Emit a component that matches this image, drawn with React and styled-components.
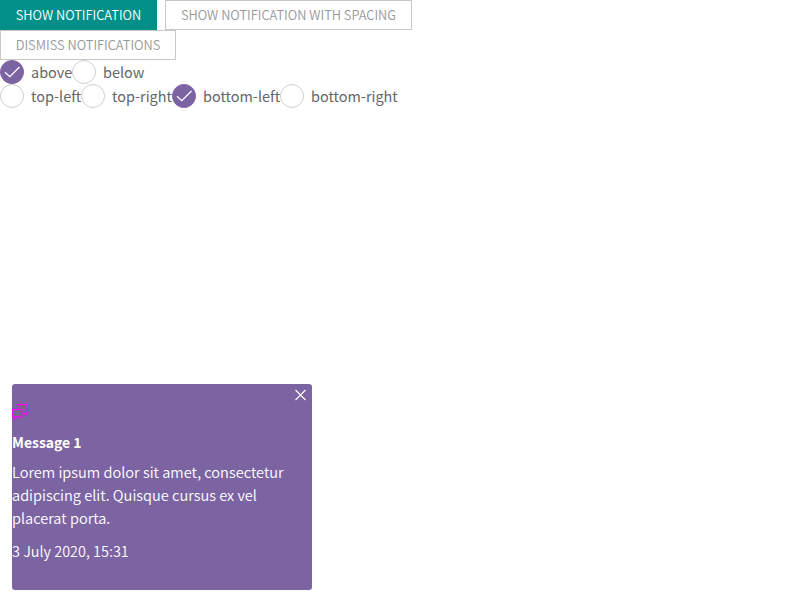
import React, { useState } from 'react';
import styled, { createGlobalStyle, css } from 'styled-components';

const GlobalStyle = createGlobalStyle`
  *, *::before, *::after { box-sizing: border-box; }
  body {
    margin: 0;
    background: #fff;
    color: #63666a;
    font-family: "Noto Sans CJK SC", sans-serif;
    font-size: 14.45px;
    line-height: 24px;
  }
  #root { height: 100vh; }
`;

const Page = styled.main`
  position: relative;
  height: 600px;
  overflow: hidden;
`;

const ButtonRow = styled.div`
  display: flex;
  gap: 8px;
`;

const Button = styled.button`
  display: block;
  width: ${p => p.$width}px;
  height: 30px;
  margin: 0;
  padding: 0;
  border: 1px solid #c8c9c7;
  background: #fff;
  color: #97999b;
  font-family: inherit;
  font-size: 12.82px;
  font-weight: 350;
  line-height: 28px;
  text-align: center;
  text-transform: uppercase;
  white-space: nowrap;
  ${p => p.$primary && css`
    border-color: #008f89;
    background: #008f89;
    color: #fff;
  `}
`;

const RadioRow = styled.div`
  display: flex;
  height: 24px;
`;

const RadioLabel = styled.label`
  display: flex;
  gap: 7px;
  width: ${p => p.$width}px;
  white-space: nowrap;
  cursor: pointer;
`;

const RadioMark = styled.span`
  display: block;
  flex: none;
  width: 24px;
  height: 24px;
  border: 1px solid ${p => (p.$checked ? '#7c63a2' : '#d0d0ce')};
  border-radius: 50%;
  background: ${p => (p.$checked ? '#7c63a2' : '#fff')};

  svg { display: block; }
`;

const Notification = styled.section`
  position: absolute;
  left: 12px;
  bottom: 10px;
  width: 300px;
  height: 206px;
  padding-top: 20px;
  border-radius: 3px;
  background: #7c63a2;
  color: #fff;
`;

const CloseButton = styled.button`
  position: absolute;
  top: 5px;
  right: 6px;
  width: 12px;
  height: 12px;
  padding: 0;
  border: 0;
  background: none;

  svg { display: block; }
`;

const MessageIcon = styled.svg`
  display: block;
  overflow: visible;
`;

const Title = styled.h4`
  margin: 11px 0 6px;
  font-size: 13.95px;
  font-weight: 700;
  line-height: 23px;
`;

const Body = styled.p`
  margin: 0 0 10px;
  font-size: 14.58px;
  font-weight: 350;
  line-height: 23px;
  white-space: pre-line;
`;

const Time = styled.time`
  display: block;
  font-size: 14.48px;
  font-weight: 350;
  line-height: 23px;
`;

function Radio({ label, checked, onSelect, width }) {
  return (
    <RadioLabel $width={width} onClick={onSelect}>
      <RadioMark $checked={checked}>
        {checked && (
          <svg width="22" height="22" viewBox="0 0 22 22" fill="none" stroke="#fff" strokeWidth="1.3">
            <path d="M4 11.2 L8.8 15.7 L18.5 6" />
          </svg>
        )}
      </RadioMark>
      <span>{label}</span>
    </RadioLabel>
  );
}

const orders = [['above', 72], ['below', 73]];
const places = [['top-left', 81], ['top-right', 91], ['bottom-left', 108], ['bottom-right', 120]];

export default function App() {
  const [order, setOrder] = useState('above');
  const [place, setPlace] = useState('bottom-left');
  return (
    <Page>
      <GlobalStyle />
      <ButtonRow>
        <Button $primary $width={157}>Show notification</Button>
        <Button $width={247}>Show notification with spacing</Button>
      </ButtonRow>
      <Button $width={176}>Dismiss notifications</Button>
      <RadioRow>
        {orders.map(([name, width]) => (
          <Radio key={name} label={name} width={width} checked={order === name} onSelect={() => setOrder(name)} />
        ))}
      </RadioRow>
      <RadioRow>
        {places.map(([name, width]) => (
          <Radio key={name} label={name} width={width} checked={place === name} onSelect={() => setPlace(name)} />
        ))}
      </RadioRow>
      <Notification>
        <CloseButton aria-label="Close">
          <svg width="12" height="12" viewBox="0 0 12 12" stroke="#fff" strokeWidth="1.1">
            <path d="M1.5 1 L11.5 11 M11.5 1 L1.5 11" />
          </svg>
        </CloseButton>
        <MessageIcon width="16" height="16" viewBox="0 0 16 16" fill="#73698f" stroke="#f0f" strokeWidth="1.25">
          <path d="M5.6 5.4 V0.5 H15.3 V9.2 H14 V10.8 L11.4 9.2 H9.5 V5.4 Z" />
          <path d="M0.6 5.5 H9.5 V12.8 H4.6 L2.3 15 V12.8 H0.6 Z" />
        </MessageIcon>
        <Title>Message 1</Title>
        <Body>{'Lorem ipsum dolor sit amet, consectetur\nadipiscing elit. Quisque cursus ex vel\nplacerat porta.'}</Body>
        <Time>3 July 2020, 15:31</Time>
      </Notification>
    </Page>
  );
}
